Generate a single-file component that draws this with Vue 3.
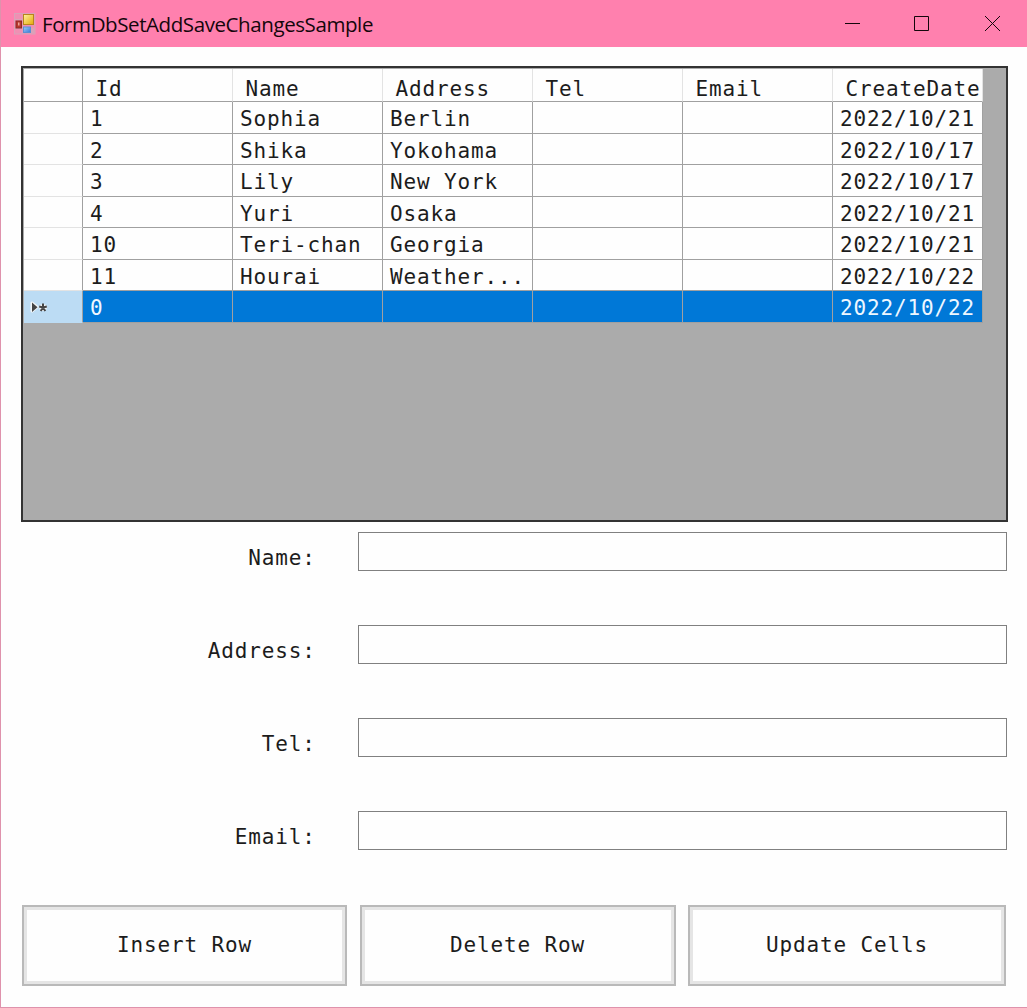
<script setup>
const columns = ['Id', 'Name', 'Address', 'Tel', 'Email', 'CreateDate']
const rows = [
  ['1', 'Sophia', 'Berlin', '', '', '2022/10/21'],
  ['2', 'Shika', 'Yokohama', '', '', '2022/10/17'],
  ['3', 'Lily', 'New York', '', '', '2022/10/17'],
  ['4', 'Yuri', 'Osaka', '', '', '2022/10/21'],
  ['10', 'Teri-chan', 'Georgia', '', '', '2022/10/21'],
  ['11', 'Hourai', 'Weather...', '', '', '2022/10/22'],
  ['0', '', '', '', '', '2022/10/22'],
]
const fields = ['Name', 'Address', 'Tel', 'Email']
const actions = ['Insert Row', 'Delete Row', 'Update Cells']
</script>

<template>
  <div class="window">
    <header class="titlebar">
      <svg class="app-icon" width="22" height="22" viewBox="0 0 22 22">
        <defs>
          <linearGradient id="gold" x1="0" y1="0" x2="1" y2="1">
            <stop offset="0" stop-color="#fff3a0" /><stop offset="1" stop-color="#e5a908" />
          </linearGradient>
          <linearGradient id="sky" x1="0" y1="0" x2="1" y2="1">
            <stop offset="0" stop-color="#9ccdfb" /><stop offset="1" stop-color="#3978d4" />
          </linearGradient>
        </defs>
        <rect x=".5" y=".5" width="20.5" height="20.5" fill="#f08fb3" stroke="#d9a3b8" />
        <path d="M1 6.5h9M9 1v19M1 15.500h9" stroke="#d9a3b8" />
        <path d="M17 15h3.500v5.500H17z" fill="#d9a3b8" />
        <rect x="9.500" y="1.500" width="10" height="10" fill="url(#gold)" stroke="#b9841c" />
        <rect x="2" y="8" width="5.500" height="7" fill="#b8372c" stroke="#8d2a29" />
        <rect x="4" y="9.500" width="1.500" height="3" fill="#eaa59a" />
        <rect x="9.500" y="14" width="7" height="5.500" fill="url(#sky)" stroke="#5b8fd2" />
      </svg>
      <span class="title">FormDbSetAddSaveChangesSample</span>
      <div class="controls">
        <svg width="16" height="16" viewBox="0 0 16 16"><path d="M0 8.500h15" /></svg>
        <svg class="maximize" width="16" height="16" viewBox="0 0 16 16"><path d="M.5 1.500h14v14H.5z" /></svg>
        <svg width="16" height="16" viewBox="0 0 16 16"><path d="M0 1l15 15M15 1L0 16" /></svg>
      </div>
    </header>

    <main>
      <div class="data-grid">
        <div class="row head">
          <div class="marker"></div>
          <div v-for="c in columns" :key="c" class="cell">{{ c }}</div>
        </div>
        <div v-for="(r, i) in rows" :key="i" class="row" :class="{ selected: i === rows.length - 1 }">
          <div class="marker">
            <svg v-if="i === rows.length - 1" width="20" height="14" viewBox="0 0 20 14">
              <g stroke="#f1f5f8" stroke-width="3" stroke-linejoin="round" fill="none">
                <path d="M2 3v8l5-4zM13 4v7M9.500 6l7 3M16.500 6l-7 3" />
              </g>
              <path d="M2 2.500v9.500l5.500-4.750z" fill="#444" />
              <path d="M13 3.500v4M9.200 6.500L13 7.500l3.800-1M10.700 11L13 7.500l2.300 3.500" stroke="#444" stroke-width="2" fill="none" />
            </svg>
          </div>
          <div v-for="(v, j) in r" :key="j" class="cell">{{ v }}</div>
        </div>
      </div>

      <form class="fields">
        <label v-for="f in fields" :key="f" class="field">
          <span>{{ f }}:</span>
          <input type="text" />
        </label>
      </form>

      <div class="actions">
        <button v-for="a in actions" :key="a" type="button">{{ a }}</button>
      </div>
    </main>
  </div>
</template>

<style>
body { background: #fefefe; }
</style>

<style scoped>
* { box-sizing: border-box; }
.window {
  width: 1027px;
  height: 1008px;
  display: flex;
  flex-direction: column;
  border: 1px solid #df92ac;
  border-top: 0;
  border-right: 0;
  background: #fefefe;
  color: #1c1c1c;
  font: 21px/30px "DejaVu Sans Mono", monospace;
  letter-spacing: 0.86px;
  overflow: hidden;
}
.titlebar {
  height: 47px;
  flex: none;
  margin-left: -1px;
  padding-left: 14px;
  display: flex;
  align-items: center;
  background: #ff80ae;
  color: #14060b;
}
.title {
  margin-left: 6px;
  font: 20.5px/30px "Open Sans", sans-serif;
  letter-spacing: -0.41px;
  white-space: nowrap;
}
.controls {
  display: flex;
  gap: 54px;
  margin-left: auto;
  padding: 0 26px 2px 0;
}
.controls svg { fill: none; stroke: #14060b; stroke-width: 1; }
.controls .maximize { margin: 0 1px 0 -1px; }
main {
  flex: 1;
  padding: 19px 20px 0;
}
.data-grid {
  width: 987px;
  height: 456px;
  padding: 1px 0 0 1px;
  border: 2px solid #333;
  background: #ababab;
}
.row {
  display: grid;
  grid-template-columns: 59px repeat(6, 150px);
  grid-template-rows: 100%;
  width: 959px;
  height: 31.5px;
}
.head { height: 33px; }
.marker {
  display: flex;
  align-items: center;
  padding-left: 6px;
  background: #fefefe;
  border-right: 1px solid #a0a0a0;
  border-bottom: 1px solid #e3e3e3;
}
.cell {
  padding-left: 7px;
  line-height: 35px;
  white-space: nowrap;
  background: #fefefe;
  border-right: 1px solid #a0a0a0;
  border-bottom: 1px solid #a0a0a0;
}
.head .cell {
  padding-left: 12.5px;
  line-height: 40px;
  border-right-color: #e3e3e3;
}
.head .marker { border-bottom-color: #a0a0a0; }
.selected .marker { padding-top: 2px; background: #bcdcf4; border-bottom-color: #bcdcf4; }
.selected .cell { background: #0078d7; color: #eef7ff; }
.fields {
  display: flex;
  flex-direction: column;
  gap: 54px;
  margin-top: 10px;
}
.field {
  display: flex;
  height: 39px;
}
.field span {
  width: 295px;
  margin-right: 42px;
  padding-top: 11px;
  text-align: right;
}
.field input {
  width: 650px;
  height: 39px;
  padding: 0 8px;
  border: 1px solid #808080;
  background: #fefefe;
  font: inherit;
}
.actions {
  display: grid;
  grid-template-columns: 325px 316px 318px;
  gap: 12.5px;
  width: 986px;
  height: 81px;
  margin: 55px 0 0 1px;
}
.actions button {
  padding: 0 0 2px;
  border: 2px solid #b9b9b9;
  box-shadow: inset 0 0 0 3px #e5e5e5;
  background: #fefefe;
  color: inherit;
  font: inherit;
  letter-spacing: inherit;
}
</style>
